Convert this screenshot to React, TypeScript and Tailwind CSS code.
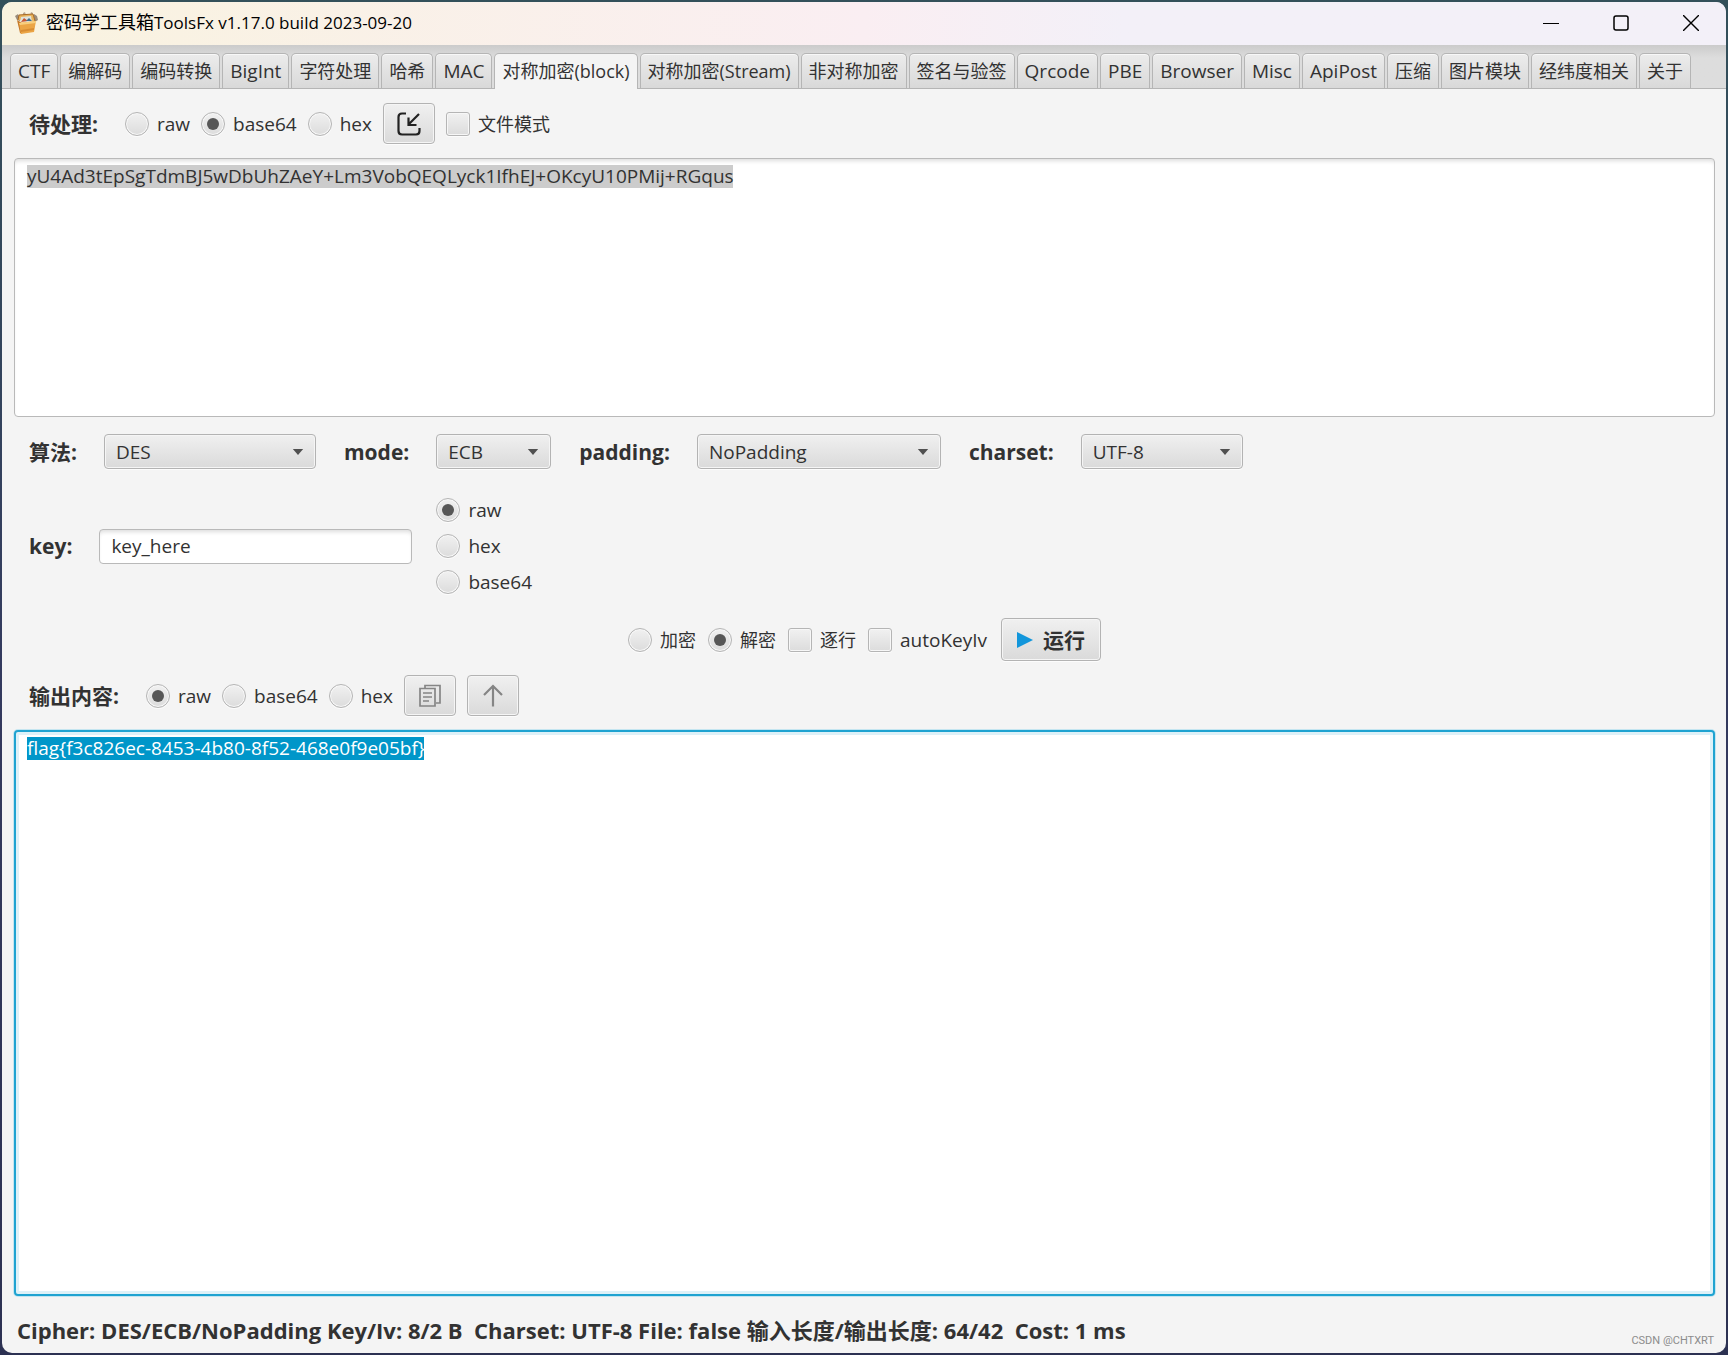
import { useState } from 'react';
import type { ReactNode } from 'react';

const TABS = [
  'CTF', '编解码', '编码转换', 'BigInt', '字符处理', '哈希', 'MAC', '对称加密(block)', '对称加密(Stream)', '非对称加密',
  '签名与验签', 'Qrcode', 'PBE', 'Browser', 'Misc', 'ApiPost', '压缩', '图片模块', '经纬度相关', '关于',
];

const FORMATS = ['raw', 'base64', 'hex'];

const boxStyle =
  'appearance-none size-6 shrink-0 border border-[#b5b5b5] bg-linear-to-b from-[#f1f1f1] to-[#dcdcdc] shadow-[inset_0_0_0_1px_#f7f7f7,0_1px_0_#fcfcfc]';
const buttonStyle =
  'flex items-center justify-center rounded-[4px] border border-[#b3b3b3] bg-linear-to-b from-[#f0f0f0] to-[#dadada] shadow-[inset_0_0_0_1px_#f5f5f5,0_1px_0_#fcfcfc]';

// latin labels run a size larger than the chinese ones
const textSize = (s: string) => (/^[A-Za-z]/.test(s) ? 'text-[19px]' : 'text-[18px]');

function Radio({ name, label, checked, onChange }: { name: string; label: string; checked: boolean; onChange: () => void }) {
  return (
    <label className={`flex items-center gap-2 leading-6 ${textSize(label)}`}>
      <input
        type="radio"
        name={name}
        checked={checked}
        onChange={onChange}
        className={`${boxStyle} grid place-items-center rounded-full checked:before:size-3 checked:before:rounded-full checked:before:bg-[#575757]`}
      />
      {label}
    </label>
  );
}

function RadioGroup({ name, options, initial }: { name: string; options: string[]; initial: string }) {
  const [value, setValue] = useState(initial);
  return (
    <>
      {options.map(o => (
        <Radio key={o} name={name} label={o} checked={value === o} onChange={() => setValue(o)} />
      ))}
    </>
  );
}

function Check({ label }: { label: string }) {
  return (
    <label className={`flex items-center gap-2 leading-6 ${textSize(label)}`}>
      <input type="checkbox" className={`${boxStyle} rounded-[3px] checked:bg-[#575757]`} />
      {label}
    </label>
  );
}

function Combo({ id, label, options, width }: { id: string; label: string; options: string[]; width: string }) {
  return (
    <div className="flex items-center gap-[27px]">
      <label htmlFor={id} className="text-[21px] font-bold">{label}</label>
      <div className={`relative ${width}`}>
        <select id={id} className={`${buttonStyle} h-[35px] w-full appearance-none px-[11px] text-[19px]`}>
          {options.map(o => <option key={o}>{o}</option>)}
        </select>
        <svg viewBox="0 0 12 7" className="pointer-events-none absolute top-[15px] right-3 h-[6px] w-3 fill-[#505050]">
          <path d="M0 0h12L6 7z" />
        </svg>
      </div>
    </div>
  );
}

function Title({ children }: { children: ReactNode }) {
  return <h2 className="mr-4 text-[21px] font-bold">{children}</h2>;
}

function ToolboxIcon() {
  return (
    <svg viewBox="0 0 24 24" className="size-6">
      <path d="M1 5l3-2 1 2 2 1-1 4-3-1zM20 3l3 2 1 4-3 2-2-3z" fill="#9a8c7c" />
      <path d="M9 2l2-1 1 3h-3zM17 1l2 1-1 3h-2z" fill="#b9a68e" />
      <path d="M4 9L5 4l14-1 2 7" fill="#e8b45c" stroke="#a86a25" />
      <path d="M7 6l10-1 1 6H6z" fill="#dfe3dc" />
      <path d="M7 11l3-4 4 3z" fill="#c9562f" />
      <path d="M12 10l3-3 3 3z" fill="#41708f" />
      <path d="M3 9l3 13 2 1V12z" fill="#c67a2b" />
      <path d="M5 12l17-2-2 11-13 2z" fill="#eba545" />
      <path d="M5 12l17-2v2L6 14z" fill="#f8cf7d" />
      <path d="M7 19l13-2v2L7 21z" fill="#d88d33" />
    </svg>
  );
}

export default function App() {
  const [tab, setTab] = useState('对称加密(block)');
  const [input, setInput] = useState('yU4Ad3tEpSgTdmBJ5wDbUhZAeY+Lm3VobQEQLyck1IfhEJ+OKcyU10PMij+RGqus');
  const [output, setOutput] = useState('flag{f3c826ec-8453-4b80-8f52-468e0f9e05bf}');

  return (
    <div className="flex min-h-screen bg-linear-to-b from-[#33505a] via-[#343a5e] to-[#2c3152] p-[2px] font-['Open_Sans','Noto_Sans_CJK_SC',sans-serif] text-[18px] leading-6 text-[#323232]">
      <div className="flex min-w-0 grow flex-col overflow-hidden rounded-[10px] bg-[#f4f4f4]">
        <header className="flex h-[43px] items-center gap-2 bg-linear-to-r from-[#f9f3df] via-[#faeef2] via-50% to-[#f3f0f8] to-65% pb-[2px] pl-3 text-black">
          <ToolboxIcon />
          <h1 className="grow text-[17px]">
            <span className="text-[18px]">密码学工具箱</span>ToolsFx v1.17.0 build 2023-09-20
          </h1>
          <button aria-label="Minimize" className="flex h-full w-[70px] items-center justify-center">
            <svg viewBox="0 0 16 16" className="size-4 stroke-black"><path d="M0 8.5h16" /></svg>
          </button>
          <button aria-label="Maximize" className="flex h-full w-[54px] items-center justify-center">
            <svg viewBox="0 0 16 16" className="size-4 fill-none stroke-black" strokeWidth="1.5"><rect x="1" y="1" width="14" height="14" rx="2" /></svg>
          </button>
          <button aria-label="Close" className="flex h-full w-[70px] items-center justify-center">
            <svg viewBox="0 0 16 16" className="size-4 stroke-black" strokeWidth="1.4"><path d="M0 0l16 16M16 0L0 16" /></svg>
          </button>
        </header>

        <nav role="tablist" className="flex gap-[2px] border-b border-[#b5b5b5] bg-linear-to-b from-[#cbcbcb] to-[#dddddd] to-30% px-2 pt-2">
          {TABS.map(t => (
            <button
              key={t}
              role="tab"
              aria-selected={t === tab}
              onClick={() => setTab(t)}
              className={`shrink-0 rounded-t-[5px] border border-b-0 border-[#b5b5b5] px-[7px] whitespace-nowrap ${textSize(t)} ${
                t === tab
                  ? '-mb-px h-9 bg-[#f4f4f4] pb-px'
                  : 'h-[35px] bg-linear-to-b from-[#ececec] to-[#d9d9d9] shadow-[inset_0_1px_0_#f8f8f8]'
              }`}
            >
              {t}
            </button>
          ))}
        </nav>

        <main className="flex grow flex-col pt-[14px] pr-[11px] pl-3">
          <div className="flex items-center gap-[11px] pl-[15px]">
            <Title>待处理:</Title>
            <RadioGroup name="input-format" options={FORMATS} initial="base64" />
            <button aria-label="Import" className={`${buttonStyle} h-[41px] w-[52px]`}>
              <svg viewBox="0 0 24 24" className="size-6 fill-none stroke-[#222]" strokeWidth="2.2">
                <path d="M9 1.5H5Q1.5 1.5 1.5 5v14q0 3.5 3.5 3.5h14q3.5 0 3.5-3.5v-3M22 2L11.5 12.5M11.5 5.5v7.500h8" />
              </svg>
            </button>
            <Check label="文件模式" />
          </div>

          <textarea
            aria-label="待处理"
            value={input}
            onChange={e => setInput(e.target.value)}
            spellCheck={false}
            className="mt-[14px] h-[259px] resize-none rounded-[4px] border border-[#b9b9b9] bg-white bg-linear-to-r from-[#cccccc] to-[#cccccc] bg-[length:706px_23px] bg-origin-content bg-no-repeat px-3 py-[6px] text-[19px] leading-[23px] shadow-[inset_0_4px_4px_-2px_#dddddd] outline-none"
          />

          <div className="mt-[17px] flex items-center gap-7 pl-[15px]">
            <Combo id="algorithm" label="算法:" options={['DES', 'AES', 'DESede']} width="w-[212px]" />
            <Combo id="mode" label="mode:" options={['ECB', 'CBC']} width="w-[115px]" />
            <Combo id="padding" label="padding:" options={['NoPadding', 'PKCS5Padding']} width="w-[244px]" />
            <Combo id="charset" label="charset:" options={['UTF-8', 'GBK']} width="w-[162px]" />
          </div>

          <div className="mt-[29px] flex items-center pl-[15px]">
            <label htmlFor="key" className="mr-[27px] text-[21px] font-bold">key:</label>
            <input
              id="key"
              defaultValue="key_here"
              className="mr-6 h-[35px] w-[313px] rounded-[4px] border border-[#b9b9b9] bg-white px-[11px] text-[19px] shadow-[inset_0_4px_4px_-2px_#dddddd] outline-none"
            />
            <div className="flex flex-col gap-3">
              <RadioGroup name="key-format" options={['raw', 'hex', 'base64']} initial="raw" />
            </div>
          </div>

          <div className="mt-6 flex items-center justify-center gap-3">
            <RadioGroup name="action" options={['加密', '解密']} initial="解密" />
            <Check label="逐行" />
            <Check label="autoKeyIv" />
            <button className={`${buttonStyle} ml-[2px] h-[43px] gap-[10px] px-[15px] text-[21px] font-bold`}>
              <svg viewBox="0 0 16 16" className="size-4 fill-[#1296db]"><path d="M0 0l16 8-16 8z" /></svg>
              运行
            </button>
          </div>

          <div className="mt-[14px] flex items-center gap-[11px] pl-[15px]">
            <Title>输出内容:</Title>
            <RadioGroup name="output-format" options={FORMATS} initial="raw" />
            <button aria-label="Copy" className={`${buttonStyle} h-[41px] w-[52px]`}>
              <svg viewBox="0 0 24 24" className="size-6 fill-none stroke-[#858585]" strokeWidth="1.7">
                <path d="M7 4V1.5h15V19h-4M2 4.5h15v17.500H2zM5 9h9M5 13h9M5 17h6" />
              </svg>
            </button>
            <button aria-label="Move up" className={`${buttonStyle} h-[41px] w-[52px]`}>
              <svg viewBox="0 0 24 24" className="size-6 fill-none stroke-[#858585]" strokeWidth="2.2">
                <path d="M12 22.5V2M3 11l9-9 9 9" />
              </svg>
            </button>
          </div>

          <textarea
            aria-label="输出内容"
            value={output}
            onChange={e => setOutput(e.target.value)}
            spellCheck={false}
            className="mt-[14px] grow resize-none rounded-[4px] border-2 border-[#1fa3d1] bg-white bg-linear-to-r from-[#0096c9] to-[#0096c9] bg-[length:397px_23px] bg-origin-content bg-no-repeat px-[11px] py-[5px] text-[19px] leading-[23px] text-white shadow-[inset_0_0_0_3px_#def1f8,0_0_0_1px_#c4e5f0] outline-none"
          />
        </main>

        <footer className="flex h-[57px] justify-between pr-3 pl-[15px]">
          <p className="mt-[22px] text-[22px] font-bold whitespace-pre">
            Cipher: DES/ECB/NoPadding Key/Iv: 8/2 B  Charset: UTF-8 File: false 输入长度/输出长度: 64/42  Cost: 1 ms
          </p>
          <span className="self-end font-[Roboto,sans-serif] text-[11px] text-[#8c8c8c]">CSDN @CHTXRT</span>
        </footer>
      </div>
    </div>
  );
}
